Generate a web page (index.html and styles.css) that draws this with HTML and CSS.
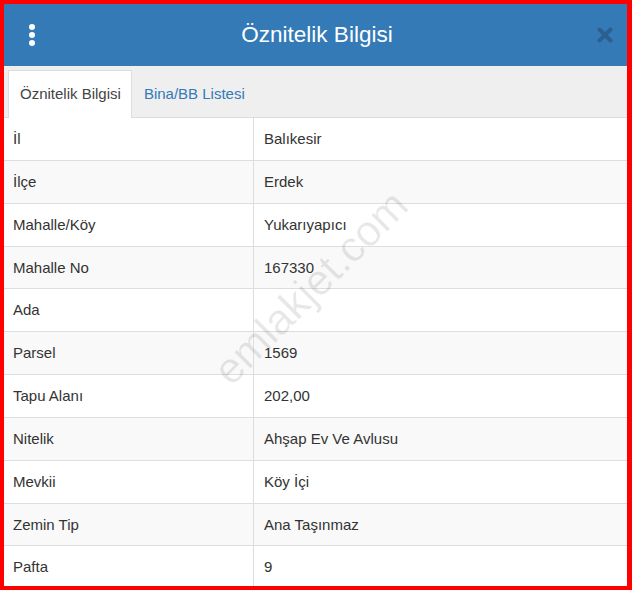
FILE: index.html
```html
<!DOCTYPE html>
<html lang="tr">
<head>
    <meta charset="UTF-8">
    <title>Öznitelik Bilgisi</title>
    <link rel="stylesheet" href="styles.css">
</head>
<body>
    <div class="frame">
        <div class="modal-header">
            <span class="kebab"><i></i><i></i><i></i></span>
            <h2>Öznitelik Bilgisi</h2>
            <svg class="close" width="16" height="16" viewBox="0 0 16 16">
                <path d="M2.5 2.5 L13.5 13.5 M13.5 2.5 L2.5 13.5" stroke="#2c5f8f" stroke-width="4" stroke-linecap="round"/>
            </svg>
        </div>
        <div class="tabs">
            <a class="tab active">Öznitelik Bilgisi</a>
            <a class="tab">Bina/BB Listesi</a>
        </div>
        <div class="table-wrap">
            <table class="info">
                <tr><td>İl</td><td>Balıkesir</td></tr>
                <tr><td>İlçe</td><td>Erdek</td></tr>
                <tr><td>Mahalle/Köy</td><td>Yukarıyapıcı</td></tr>
                <tr><td>Mahalle No</td><td>167330</td></tr>
                <tr><td>Ada</td><td></td></tr>
                <tr><td>Parsel</td><td>1569</td></tr>
                <tr><td>Tapu Alanı</td><td>202,00</td></tr>
                <tr><td>Nitelik</td><td>Ahşap Ev Ve Avlusu</td></tr>
                <tr><td>Mevkii</td><td>Köy İçi</td></tr>
                <tr><td>Zemin Tip</td><td>Ana Taşınmaz</td></tr>
                <tr><td>Pafta</td><td>9</td></tr>
            </table>
            <div class="watermark">emlakjet.com</div>
        </div>
    </div>
</body>
</html>
```
FILE: styles.css
```css
body {
    margin: 0;
    font-family: "Liberation Sans", Arial, sans-serif;
    font-size: 15px;
    color: #333;
}
.frame {
    width: 632px;
    height: 590px;
    box-sizing: border-box;
    border: 4px solid #f00;
    border-right-width: 5px;
    overflow: hidden;
    background: #fff;
}
.modal-header {
    height: 62px;
    background-color: #337ab7;
    display: flex;
    align-items: center;
    justify-content: space-between;
    padding: 0 14px 0 25px;
}
.modal-header h2 {
    margin: 0;
    font-size: 22.5px;
    font-weight: normal;
    color: #fff;
}
.kebab {
    display: flex;
    flex-direction: column;
    gap: 2px;
    width: 8px;
}
.kebab i {
    display: block;
    width: 6px;
    height: 6px;
    border-radius: 50%;
    background: #fff;
}
.close {
    display: block;
}
.tabs {
    height: 52px;
    background: #efefef;
    border-bottom: 1px solid #ddd;
    box-sizing: border-box;
    display: flex;
    align-items: flex-end;
    padding-left: 4px;
}
.tab {
    display: block;
    padding: 13px 10px 14px 11px;
    line-height: 20px;
    color: #337ab7;
    margin-bottom: -1px;
    border: 1px solid transparent;
    border-bottom: none;
}
.tab.active {
    color: #444;
    background: #fff;
    border-color: #ddd;
}
.table-wrap {
    position: relative;
}
.info {
    width: 100%;
    border-collapse: collapse;
}
.info td {
    padding: 11px 8px 10.85px 9px;
    line-height: 20px;
    height: 20px;
    border-top: 1px solid #ddd;
}
.info td:first-child {
    width: 232px;
    border-right: 1px solid #ddd;
}
.info td:last-child {
    padding-left: 10px;
}
.info tr:nth-child(even) td {
    background: #f9f9f9;
}
.info tr:first-child td {
    border-top: none;
}
.watermark {
    position: absolute;
    left: 180px;
    top: 145px;
    font-size: 43px;
    color: rgba(0, 0, 0, 0.09);
    transform: rotate(-45deg);
    pointer-events: none;
    white-space: nowrap;
}
```
